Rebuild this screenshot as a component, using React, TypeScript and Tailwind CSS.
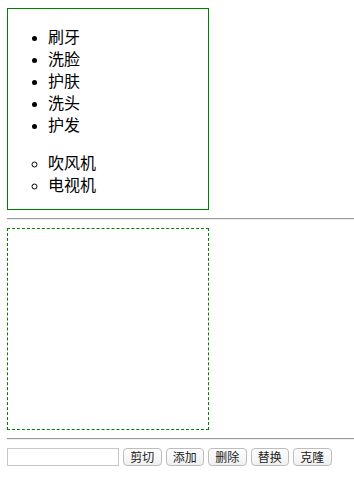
import { useState } from "react";

const first = ["刷牙", "洗脸", "护肤", "洗头", "护发"];
const second = ["吹风机", "电视机"];
const actions = ["剪切", "添加", "删除", "替换", "克隆"];

export default function App() {
  const [text, setText] = useState("");

  return (
    <div className="pl-[7px] pt-[8px] font-['Liberation_Serif','Noto_Sans_CJK_SC',serif] text-[16px] leading-[22px] text-black">
      <div className="w-[202px] h-[202px] border border-[#008000] pt-[2px]">
        <ul className="mt-[16px] pl-[40px] list-disc">
          {first.map((item) => (
            <li key={item}>{item}</li>
          ))}
        </ul>
        <ul className="mt-[16px] pl-[40px] list-[circle]">
          {second.map((item) => (
            <li key={item}>{item}</li>
          ))}
        </ul>
      </div>

      <hr className="mt-[8px] border-t border-b border-t-[#9a9a9a] border-b-[#eeeeee]" />

      <div className="mt-[8px] w-[202px] h-[202px] border border-dashed border-[#008000]" />

      <hr className="mt-[8px] border-t border-b border-t-[#9a9a9a] border-b-[#eeeeee]" />

      <div className="mt-[8px] flex items-center gap-[4px] font-['Noto_Sans_CJK_SC',sans-serif] text-[12px]">
        <input
          value={text}
          onChange={(e) => setText(e.target.value)}
          className="w-[112px] h-[18px] border border-[#c8c8c8] bg-white outline-none"
        />
        {actions.map((a) => (
          <button
            key={a}
            className="w-[38.5px] h-[18px] leading-[16px] border border-[#bdbdbd] rounded-[4px] bg-gradient-to-b from-white to-[#f0f0f0] text-[#222]"
          >
            {a}
          </button>
        ))}
      </div>
    </div>
  );
}
